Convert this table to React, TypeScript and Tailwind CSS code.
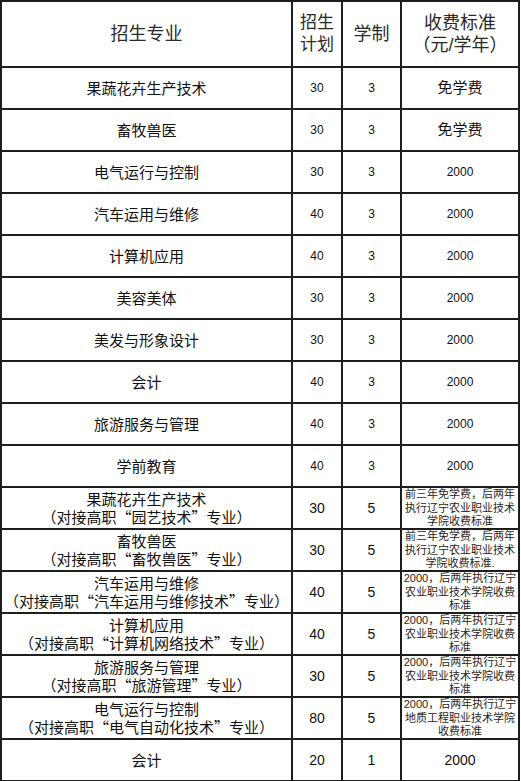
import React from 'react';

type Row = {
  name: string;
  sub?: string;
  plan: string;
  years: string;
  fee: string;
  note?: boolean;
  big?: boolean;
};

const rows: Row[] = [
  { name: '果蔬花卉生产技术', plan: '30', years: '3', fee: '免学费' },
  { name: '畜牧兽医', plan: '30', years: '3', fee: '免学费' },
  { name: '电气运行与控制', plan: '30', years: '3', fee: '2000' },
  { name: '汽车运用与维修', plan: '40', years: '3', fee: '2000' },
  { name: '计算机应用', plan: '40', years: '3', fee: '2000' },
  { name: '美容美体', plan: '30', years: '3', fee: '2000' },
  { name: '美发与形象设计', plan: '30', years: '3', fee: '2000' },
  { name: '会计', plan: '40', years: '3', fee: '2000' },
  { name: '旅游服务与管理', plan: '40', years: '3', fee: '2000' },
  { name: '学前教育', plan: '40', years: '3', fee: '2000' },
  {
    name: '果蔬花卉生产技术',
    sub: '（对接高职“园艺技术”专业）',
    plan: '30',
    years: '5',
    fee: '前三年免学费，后两年执行辽宁农业职业技术学院收费标准',
    note: true,
  },
  {
    name: '畜牧兽医',
    sub: '（对接高职“畜牧兽医”专业）',
    plan: '30',
    years: '5',
    fee: '前三年免学费，后两年执行辽宁农业职业技术学院收费标准.',
    note: true,
  },
  {
    name: '汽车运用与维修',
    sub: '（对接高职“汽车运用与维修技术”专业）',
    plan: '40',
    years: '5',
    fee: '2000，后两年执行辽宁农业职业技术学院收费标准',
    note: true,
  },
  {
    name: '计算机应用',
    sub: '（对接高职“计算机网络技术”专业）',
    plan: '40',
    years: '5',
    fee: '2000，后两年执行辽宁农业职业技术学院收费标准',
    note: true,
  },
  {
    name: '旅游服务与管理',
    sub: '（对接高职“旅游管理”专业）',
    plan: '30',
    years: '5',
    fee: '2000，后两年执行辽宁农业职业技术学院收费标准',
    note: true,
  },
  {
    name: '电气运行与控制',
    sub: '（对接高职“电气自动化技术”专业）',
    plan: '80',
    years: '5',
    fee: '2000，后两年执行辽宁地质工程职业技术学院收费标准',
    note: true,
  },
  { name: '会计', plan: '20', years: '1', fee: '2000', big: true },
];

const cell = 'border-r-2 border-b-2 border-[#1e1e1e] flex flex-col items-center justify-center text-center overflow-hidden';

export default function App() {
  return (
    <div
      className="w-[521px] h-[781px] overflow-hidden bg-white text-[#111]"
      style={{ fontFamily: '"Liberation Sans", "Noto Sans CJK SC", sans-serif' }}
    >
      <div className="grid grid-cols-[291px_50px_59px_118px] w-[520px] border-l-2 border-t-2 border-[#1e1e1e]">
        {/* Header */}
        <div className={`${cell} h-[66px] text-[18px] text-[#2a2a2a]`}>招生专业</div>
        <div className={`${cell} h-[66px] text-[17px] leading-[22px] text-[#2a2a2a]`}>
          <span>招生</span>
          <span>计划</span>
        </div>
        <div className={`${cell} h-[66px] text-[18px] text-[#2a2a2a]`}>学制</div>
        <div className={`${cell} h-[66px] text-[18px] leading-[22px] text-[#2a2a2a]`}>
          <span>收费标准</span>
          <span>（元/学年）</span>
        </div>

        {rows.map((r, i) => (
          <React.Fragment key={i}>
            <div className={`${cell} h-[42px] text-[15px] leading-[17px]`}>
              <span>{r.name}</span>
              {r.sub && (
                <span className="font-['Noto_Sans_CJK_SC',sans-serif] [font-feature-settings:'fwid']">{r.sub}</span>
              )}
            </div>
            <div className={`${cell} h-[42px] ${r.sub || r.big ? 'text-[14px]' : 'text-[12px]'}`}>{r.plan}</div>
            <div className={`${cell} h-[42px] ${r.sub || r.big ? 'text-[14px]' : 'text-[12px]'}`}>{r.years}</div>
            {r.note ? (
              <div className="border-r-2 border-b-2 border-[#1e1e1e] h-[42px] overflow-hidden px-[1px]">
                <p className="text-[11px] leading-[13.5px] text-center text-[#2a2418]">{r.fee}</p>
              </div>
            ) : (
              <div
                className={`${cell} h-[42px] ${
                  r.fee === '免学费' ? 'text-[15px]' : r.big ? 'text-[14px]' : 'text-[12px]'
                }`}
              >
                {r.fee}
              </div>
            )}
          </React.Fragment>
        ))}
      </div>
    </div>
  );
}
